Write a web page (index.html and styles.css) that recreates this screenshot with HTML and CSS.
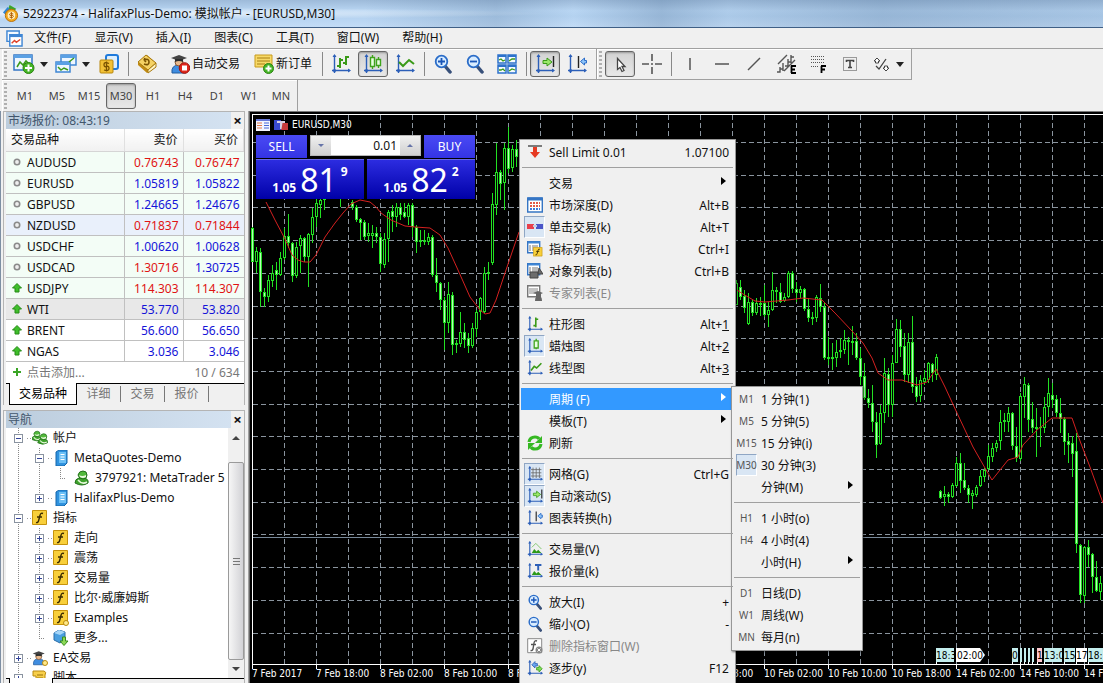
FILE: index.html
```html
<!DOCTYPE html>
<html lang="zh-CN">

<head>
    <meta charset="UTF-8">
    <meta name="viewport" content="width=device-width, initial-scale=1.0">
    <title>52922374 - HalifaxPlus-Demo: 模拟帐户 - [EURUSD,M30]</title>
    <link rel="stylesheet" href="styles.css">
</head>

<body>
    <!-- icons -->
    <svg class="sprite" aria-hidden="true">
        <symbol id="i-axes" viewBox="0 0 20 20">
            <path d="M3.5 1v18M1 16.5h18" stroke="#2c5fb8" stroke-width="1.4" fill="none" />
            <path d="M3.5 0l2 3h-4zM20 16.5l-3-2v4z" fill="#2c5fb8" />
            <circle cx="3.500" cy="16.500" r="1.600" fill="#2c5fb8" />
        </symbol>
        <symbol id="i-bars" viewBox="0 0 20 20">
            <use href="#i-axes" />
            <path d="M9 4v10M6 12h3M9 6h3M15 2v9M12 9h3M15 3h3" stroke="#3a9a18" stroke-width="2" fill="none" />
        </symbol>
        <symbol id="i-bar1" viewBox="0 0 20 20">
            <use href="#i-axes" />
            <path d="M11 2v12M8 12h3M11 4h3" stroke="#3a9a18" stroke-width="2" fill="none" />
        </symbol>
        <symbol id="i-candles" viewBox="0 0 20 20">
            <use href="#i-axes" />
            <path d="M9.500 1v2M9.500 13v2M7.500 3.500h4v9h-4zM15.500 3v2M15.500 11v3M13.500 5.500h4v6h-4z" stroke="#3fa41c" stroke-width="1.400" fill="#e8ffe0" />
        </symbol>
        <symbol id="i-candle1" viewBox="0 0 20 20">
            <use href="#i-axes" />
            <path d="M11.500 1v2M11.500 12v2M9 3.500h5v9h-5z" stroke="#3fa41c" stroke-width="1.600" fill="#e8ffe0" />
        </symbol>
        <symbol id="i-line" viewBox="0 0 20 20">
            <use href="#i-axes" />
            <path d="M4 8l4 4 6-6 5 4" stroke="#3a9a18" stroke-width="2" fill="none" />
        </symbol>
        <symbol id="i-line1" viewBox="0 0 20 20">
            <use href="#i-axes" />
            <path d="M5 13l4-5 3 2 6-6" stroke="#3a9a18" stroke-width="2" fill="none" />
        </symbol>
        <symbol id="i-scroll" viewBox="0 0 20 20">
            <use href="#i-axes" />
            <path d="M18.500 2v11" stroke="#222" stroke-width="1.400" />
            <path d="M8 6.500h4V4l5 4-5 4V9.500H8z" fill="#9be86a" stroke="#3a9a18" />
        </symbol>
        <symbol id="i-shift" viewBox="0 0 20 20">
            <use href="#i-axes" />
            <path d="M11.500 2v12" stroke="#222" stroke-width="1.400" />
            <path d="M19.500 6.500h-2V4l-4 3.500 4 3.500V9h2z" fill="#8ec4f8" stroke="#2c6cc8" />
        </symbol>
        <symbol id="i-zoomin" viewBox="0 0 20 20">
            <path d="M12 12l5 6" stroke="#38507a" stroke-width="3.500" stroke-linecap="round" />
            <circle cx="8.500" cy="7.500" r="5.800" fill="#d8ecff" stroke="#2a6cc8" stroke-width="1.800" />
            <path d="M5 7.500h7M8.500 4v7" stroke="#1a56b8" stroke-width="1.800" />
        </symbol>
        <symbol id="i-zoomout" viewBox="0 0 20 20">
            <path d="M12 12l5 6" stroke="#38507a" stroke-width="3.500" stroke-linecap="round" />
            <circle cx="8.500" cy="7.500" r="5.800" fill="#d8ecff" stroke="#2a6cc8" stroke-width="1.800" />
            <path d="M5 7.500h7" stroke="#1a56b8" stroke-width="1.800" />
        </symbol>
        <symbol id="i-caret" viewBox="0 0 8 5">
            <path d="M0 0h8L4 5z" fill="#222" />
        </symbol>
        <symbol id="i-newchart" viewBox="0 0 22 20">
            <path d="M1 1h18v15H1z" fill="#eef6ff" stroke="#3575c4" stroke-width="1.500" />
            <path d="M1 1h18v3H1z" fill="#5aa0e4" />
            <path d="M4 13l3-5 3 3 3-4 4 4" stroke="#3a9a18" stroke-width="1.500" fill="none" />
            <circle cx="15.500" cy="14" r="5.500" fill="#45b525" stroke="#2b8312" />
            <path d="M12 14h7M15.500 10.500v7" stroke="#fff" stroke-width="2" />
        </symbol>
        <symbol id="i-profiles" viewBox="0 0 22 20">
            <path d="M6 1h15v10H6z" fill="#eef6ff" stroke="#3f86d4" stroke-width="1.500" />
            <path d="M6 1h15v3H6z" fill="#5aa0e4" />
            <path d="M1 8h14v10H1z" fill="#eef6ff" stroke="#3f86d4" stroke-width="1.500" />
            <path d="M1 8h14v3H1z" fill="#5aa0e4" />
            <path d="M3 13l3 3 3-2 4 2M14 8l5-4" stroke="#3a9a18" stroke-width="1.500" fill="none" />
        </symbol>
        <symbol id="i-money" viewBox="0 0 20 20">
            <rect x="7" y="1" width="12" height="14" rx="2" fill="#dcefff" stroke="#1e7adc" stroke-width="2" />
            <rect x="1" y="6" width="13" height="13" rx="1" fill="#f2c136" stroke="#b8860b" />
            <path d="M10 9.500q-5-2-5 1t2.500 2 2.500 2-5 1.500M7.500 7.500v10" stroke="#7a5200" stroke-width="1.300" fill="none" />
        </symbol>
        <symbol id="i-book" viewBox="0 0 20 20">
            <path d="M1 9l9-8 9 8v4l-9 6-9-8z" fill="#c08a12" />
            <path d="M1 8l8-7 10 8-8 7z" fill="#f5d264" stroke="#a87a10" />
            <path d="M11 16v3l8-6V9z" fill="#fff3c4" stroke="#a87a10" />
            <path d="M7 6q5-2 5 2t-5 2M7 6l1-2M7 6l2 2" stroke="#7a5200" stroke-width="1.600" fill="none" />
        </symbol>
        <symbol id="i-expert" viewBox="0 0 20 20">
            <path d="M2 19q-1-8 7-8 8 0 7 8z" fill="#3f8de0" stroke="#235c9e" />
            <circle cx="9" cy="8" r="4" fill="#e9b98c" stroke="#8a5a34" />
            <path d="M1 4l8-3 8 3-8 3z" fill="#444" />
            <path d="M5 5v3q4-2 8 0V5z" fill="#2c2c2c" />
        </symbol>
        <symbol id="i-autotrade" viewBox="0 0 20 20">
            <use href="#i-expert" />
            <circle cx="14.500" cy="14" r="5.300" fill="#e0261a" stroke="#a0140c" />
            <rect x="12" y="11.500" width="5" height="5" fill="#fff" />
        </symbol>
        <symbol id="i-order" viewBox="0 0 20 20">
            <path d="M1 1h17v12H1z" fill="#f7d967" stroke="#c79a1c" />
            <path d="M3 4h13M3 7h13M3 10h8" stroke="#a87f14" />
            <circle cx="14.500" cy="14.500" r="5" fill="#45b525" stroke="#2b8312" />
            <path d="M11.500 14.500h6M14.500 11.500v6" stroke="#fff" stroke-width="2" />
        </symbol>
        <symbol id="i-tile" viewBox="0 0 20 20">
            <path d="M1 1h8v8H1zM11 1h8v8h-8zM1 11h8v8H1zM11 11h8v8h-8z" fill="#f4faff" stroke="#2c72cc" stroke-width="1.500" />
            <path d="M1 2h8M11 2h8M1 12h8M11 12h8" stroke="#2c72cc" stroke-width="2" />
            <path d="M2 6l2-1 2 2 2-1M12 7l3-2 3 0M2 16l2 0 2-1 2 2M12 17l3-2 3 1" stroke="#3a9a18" stroke-width="1.300" fill="none" />
        </symbol>
        <symbol id="i-cursor" viewBox="0 0 20 20">
            <path d="M7.500 4.500v11l2.500-2 2 4 2-1-2-4h3z" fill="#fff" stroke="#444" stroke-width="1.300" />
        </symbol>
        <symbol id="i-cross" viewBox="0 0 20 20">
            <path d="M10 0v7M10 13v7M0 10h7M13 10h7M9 10h2" stroke="#555" stroke-width="1.600" />
        </symbol>
        <symbol id="i-vline" viewBox="0 0 20 20">
            <path d="M10 4v12" stroke="#555" stroke-width="1.500" />
        </symbol>
        <symbol id="i-hline" viewBox="0 0 20 20">
            <path d="M3 10h14" stroke="#555" stroke-width="1.500" />
        </symbol>
        <symbol id="i-trend" viewBox="0 0 20 20">
            <path d="M4 16L16 4" stroke="#555" stroke-width="1.500" />
        </symbol>
        <symbol id="i-channel" viewBox="0 0 20 20">
            <path d="M2 10L11 1M8 17L19 6M1 18h3v-5M4 15h3M7 17V9M9 12h3V5M12 8h3M15 9V1M15 3h3" stroke="#555" stroke-width="1.400" fill="none" />
            <path d="M15 12h5M15 15.500h4M15 19h5M15.500 12v7" stroke="#000" stroke-width="1.800" />
        </symbol>
        <symbol id="i-fibo" viewBox="0 0 20 20">
            <path d="M3 2.500h14M3 5.500h14M3 8.500h14M3 12.500h8" stroke="#555" stroke-dasharray="1 1" />
            <path d="M13 12h5M13 15.500h4M13.500 12v7" stroke="#000" stroke-width="1.800" />
        </symbol>
        <symbol id="i-text" viewBox="0 0 20 20">
            <path d="M3.500 3.500h13v13h-13z" fill="none" stroke="#444" stroke-dasharray="1 1" />
            <path d="M6.500 8V6.500h7V8M10 6.500v7M8 13.500h4" stroke="#444" stroke-width="1.600" fill="none" />
        </symbol>
        <symbol id="i-arrows" viewBox="0 0 20 20">
            <path d="M6 4l3 3H7.500v2h-3V7H3zM15 17l-3-3h1.500v-2h3v2H18z" fill="#fff" stroke="#444" />
            <path d="M5 12l3 3 7-10" fill="none" stroke="#444" stroke-width="1.300" />
        </symbol>
        <symbol id="i-logo" viewBox="0 0 18 18">
            <path d="M8 0l7 4-3 4-6-2z" fill="#3ba52a" />
            <path d="M1 8l5-6 3 3-3 7z" fill="#2f86d4" />
            <circle cx="10" cy="11" r="6.500" fill="#f4a91a" stroke="#b96e08" />
            <circle cx="10" cy="11" r="4" fill="#fff0c0" />
            <path d="M12 9.500q-4-1.500-4 .3t2 1.200 2 1.300-4 .6M10 7.500v7" stroke="#b05c00" fill="none" />
        </symbol>
        <symbol id="i-window" viewBox="0 0 18 18">
            <path d="M1 1h13v11H1z" fill="#f4faff" stroke="#3f86d4" stroke-width="1.500" />
            <path d="M4 5h13v12H4z" fill="#fff" stroke="#3f86d4" stroke-width="1.500" />
            <path d="M4 6h13" stroke="#3f86d4" stroke-width="3" />
            <path d="M6 14l3-3 2 2 4-3" stroke="#e0452c" stroke-width="1.500" fill="none" />
        </symbol>
        <symbol id="i-up" viewBox="0 0 10 10">
            <path d="M5 .5L9.500 5H7v4H3V5H.5z" fill="#3fbf2b" stroke="#268a17" />
        </symbol>
        <symbol id="i-dot" viewBox="0 0 10 10">
            <circle cx="5" cy="5" r="2.700" fill="#eee" stroke="#8a8a8a" stroke-width="1.600" />
        </symbol>
        <symbol id="i-plus" viewBox="0 0 10 10">
            <path d="M5 1v8M1 5h8" stroke="#3aa525" stroke-width="2" />
        </symbol>
        <symbol id="i-user" viewBox="0 0 16 16">
            <path d="M1 13q0-4 4-5h5q5 1 4 5-6 4-13 0z" fill="#3fa32c" stroke="#22701a" />
            <path d="M4 5q1-4 5-4t4 4q0 4-4 4T4 5z" fill="#52b93b" stroke="#22701a" />
            <path d="M5 5q3 2 7 0v2q-3 2-6 0z" fill="#e8f8dc" />
            <path d="M4 10q4 5 9 2" stroke="#e8f8dc" stroke-width="1.500" fill="none" />
        </symbol>
        <symbol id="i-users" viewBox="0 0 16 16">
            <use href="#i-user" x="-1" y="0" width="11" height="12" />
            <use href="#i-user" x="5" y="2" width="12" height="14" />
        </symbol>
        <symbol id="i-server" viewBox="0 0 16 16">
            <path d="M3 2l3-2h8v13l-3 3H3z" fill="#2f92de" stroke="#1667ab" />
            <path d="M6 2h7v11H6z" fill="#6cc0f6" />
            <path d="M7.500 4.500h4M7.500 7h4M7.500 9.500h4" stroke="#fff" />
        </symbol>
        <symbol id="i-func" viewBox="0 0 16 16">
            <path d="M.5.5h14v14H.5z" fill="#f8cf3a" stroke="#c6930c" />
            <path d="M11 3.500q-2.500-1-3 2L6.500 11q-.5 2-2.500 1.500M5 7h5" stroke="#3c2c00" stroke-width="1.400" fill="none" />
        </symbol>
        <symbol id="i-funcx" viewBox="0 0 16 16">
            <use href="#i-func" />
            <circle cx="13" cy="13" r="2.500" fill="#ffe98a" stroke="#b98a10" />
        </symbol>
        <symbol id="i-more" viewBox="0 0 16 16">
            <path d="M1 3l5-3 6 2v7l-5 4-6-3z" fill="#4a9fe0" stroke="#2a6ca8" />
            <path d="M1 3l6 2 5-3-6-2z" fill="#a6d6f8" />
            <path d="M9.500 7h3v4h2.500L11 15.500 7 11h2.500z" fill="#8cd858" stroke="#3a8f1c" />
        </symbol>
        <symbol id="i-ea" viewBox="0 0 16 16">
            <use href="#i-expert" width="15" height="16" />
            <circle cx="13" cy="13" r="2.500" fill="#ffe98a" stroke="#b98a10" />
        </symbol>
        <symbol id="i-script" viewBox="0 0 16 16">
            <path d="M1 1h11q3 1 1 4v9H4V6H1z" fill="#f8cf4a" stroke="#b98a10" />
            <path d="M5 5h6M5 8h6" stroke="#9a7208" />
        </symbol>
        <symbol id="i-selllimit" viewBox="0 0 16 16">
            <path d="M1 2h14" stroke="#555" stroke-width="1.500" />
            <path d="M6 3h4v5h3l-5 6-5-6h3z" fill="#e63a22" />
        </symbol>
        <symbol id="i-depth" viewBox="0 0 16 16">
            <path d="M.7 1h14.600v14H.7z" fill="#fff" stroke="#3575c4" stroke-width="1.400" />
            <path d="M1 2h14" stroke="#3575c4" stroke-width="3" />
            <path d="M3 6h10M3 9h10" stroke="#e25a4a" stroke-width="2" stroke-dasharray="2 1" />
            <path d="M3 12h10" stroke="#3f78d8" stroke-width="2" stroke-dasharray="2 1" />
        </symbol>
        <symbol id="i-oneclick" viewBox="0 0 16 16">
            <path d="M0 5h7v5H0z" fill="#e8404c" />
            <path d="M9 5h7v5H9z" fill="#4a55c8" />
            <path d="M6 6h4v2H6z" fill="#c8cce0" />
        </symbol>
        <symbol id="i-list" viewBox="0 0 16 16">
            <path d="M.7.7h12v11H.7z" fill="#fff" stroke="#3575c4" stroke-width="1.400" />
            <path d="M1 1.500h12" stroke="#3f86d4" stroke-width="2" />
            <path d="M2 5h2M5 5h6M2 7h2M5 7h6M2 9h2M5 9h6" stroke="#777" />
        </symbol>
        <symbol id="i-indlist" viewBox="0 0 16 16">
            <use href="#i-list" />
            <use href="#i-func" x="6" y="6" width="10" height="10" />
        </symbol>
        <symbol id="i-objlist" viewBox="0 0 16 16">
            <use href="#i-list" />
            <path d="M3 9h8v6H3zM12 5l4 6h-5z" fill="#6c6c6c" stroke="#444" />
        </symbol>
        <symbol id="i-explist" viewBox="0 0 16 16">
            <path d="M.7.7h12v11H.7z" fill="#fff" stroke="#777" stroke-width="1.400" />
            <path d="M2 4h9M2 6h9M2 8h6" stroke="#888" />
            <path d="M6 8l5-2 5 2-2 1v3q1 1 1 4H8q0-3 1-4V9z" fill="#666" />
        </symbol>
        <symbol id="i-refresh" viewBox="0 0 16 16">
            <path d="M2 7q1-5 6-5 3 0 4 2" stroke="#35b822" stroke-width="3.200" fill="none" />
            <path d="M15 1v7H8z" fill="#35b822" />
            <path d="M14 9q-1 5-6 5-3 0-4-2" stroke="#35b822" stroke-width="3.200" fill="none" />
            <path d="M1 15V8h7z" fill="#35b822" />
        </symbol>
        <symbol id="i-grid" viewBox="0 0 20 20">
            <use href="#i-axes" />
            <path d="M7.500 2v13M11.500 2v13M15.500 2v13M5 4.500h13M5 8.500h13M5 12.500h13" stroke="#666" />
        </symbol>
        <symbol id="i-volume" viewBox="0 0 20 20">
            <use href="#i-axes" />
            <path d="M6 8l5-5 7 7" stroke="#6bbd55" fill="none" />
            <path d="M6 15l3-5 3 3 2-2 4 4z" fill="#2d9a18" />
        </symbol>
        <symbol id="i-tickvol" viewBox="0 0 20 20">
            <use href="#i-axes" />
            <path d="M10 2.500h8M14 2.500v7" stroke="#2c5fb8" stroke-width="2.400" />
            <path d="M6 15l3-5 3 3 2-2 4 4z" fill="#2d9a18" />
        </symbol>
        <symbol id="i-delind" viewBox="0 0 16 16">
            <path d="M.7.7h14v14H.7z" fill="#fff" stroke="#888" />
            <path d="M10 3q-2.500-1-3 2l-1 6q-.5 2-2.500 1.500M4 6.500h5" stroke="#555" stroke-width="1.400" fill="none" />
            <circle cx="12" cy="12" r="3.500" fill="#888" />
            <path d="M10.500 10.500l3 3M13.500 10.500l-3 3" stroke="#fff" />
        </symbol>
        <symbol id="i-step" viewBox="0 0 20 20">
            <use href="#i-axes" />
            <path d="M6 6l4-4v2.500h3v3h-3V10z" fill="#6aa6ee" stroke="#2c5fb8" />
            <path d="M19 11l-4-4v2.500h-3v3h3V15z" fill="#7fdc5a" stroke="#3a9a18" />
        </symbol>
    </svg>

    <header class="titlebar">
        <svg class="logo"><use href="#i-logo" /></svg>
        <h1>52922374 - HalifaxPlus-Demo: 模拟帐户 - [EURUSD,M30]</h1>
    </header>

    <nav class="menubar">
        <svg class="logo"><use href="#i-window" /></svg>
        <button>文件(F)</button>
        <button>显示(V)</button>
        <button>插入(I)</button>
        <button>图表(C)</button>
        <button>工具(T)</button>
        <button>窗口(W)</button>
        <button>帮助(H)</button>
    </nav>

    <div class="toolbars">
        <div class="toolbar">
            <span class="grip"></span>
            <button class="tool drop" aria-label="新图表"><svg class="ico wide"><use href="#i-newchart" /></svg><svg class="caret"><use href="#i-caret" /></svg></button>
            <button class="tool drop" aria-label="配置文件"><svg class="ico wide"><use href="#i-profiles" /></svg><svg class="caret"><use href="#i-caret" /></svg></button>
            <button class="tool" aria-label="市场报价"><svg class="ico"><use href="#i-money" /></svg></button>
            <i class="sep"></i>
            <button class="tool" aria-label="历史"><svg class="ico"><use href="#i-book" /></svg></button>
            <button class="tool text"><svg class="ico"><use href="#i-autotrade" /></svg>自动交易</button>
            <button class="tool text"><svg class="ico"><use href="#i-order" /></svg>新订单</button>
            <i class="sep"></i>
            <button class="tool" aria-label="柱形图"><svg class="ico"><use href="#i-bars" /></svg></button>
            <button class="tool on" aria-label="蜡烛图"><svg class="ico"><use href="#i-candles" /></svg></button>
            <button class="tool" aria-label="线型图"><svg class="ico"><use href="#i-line" /></svg></button>
            <i class="sep"></i>
            <button class="tool" aria-label="放大"><svg class="ico"><use href="#i-zoomin" /></svg></button>
            <button class="tool" aria-label="缩小"><svg class="ico"><use href="#i-zoomout" /></svg></button>
            <button class="tool" aria-label="平铺"><svg class="ico"><use href="#i-tile" /></svg></button>
            <i class="sep"></i>
            <button class="tool on" aria-label="自动滚动"><svg class="ico"><use href="#i-scroll" /></svg></button>
            <button class="tool" aria-label="图表转换"><svg class="ico"><use href="#i-shift" /></svg></button>
        </div>
        <div class="toolbar">
            <span class="grip"></span>
            <button class="tool on" aria-label="光标"><svg class="ico"><use href="#i-cursor" /></svg></button>
            <button class="tool" aria-label="十字线"><svg class="ico"><use href="#i-cross" /></svg></button>
            <i class="sep"></i>
            <button class="tool" aria-label="垂直线"><svg class="ico"><use href="#i-vline" /></svg></button>
            <button class="tool" aria-label="水平线"><svg class="ico"><use href="#i-hline" /></svg></button>
            <button class="tool" aria-label="趋势线"><svg class="ico"><use href="#i-trend" /></svg></button>
            <button class="tool" aria-label="通道"><svg class="ico"><use href="#i-channel" /></svg></button>
            <button class="tool" aria-label="斐波纳契"><svg class="ico"><use href="#i-fibo" /></svg></button>
            <button class="tool" aria-label="文本"><svg class="ico"><use href="#i-text" /></svg></button>
            <button class="tool drop" aria-label="箭头"><svg class="ico"><use href="#i-arrows" /></svg><svg class="caret"><use href="#i-caret" /></svg></button>
        </div>
    </div>
    <div class="toolbars">
        <div class="toolbar periods">
            <span class="grip"></span>
            <button class="tool">M1</button>
            <button class="tool">M5</button>
            <button class="tool">M15</button>
            <button class="tool on">M30</button>
            <button class="tool">H1</button>
            <button class="tool">H4</button>
            <button class="tool">D1</button>
            <button class="tool">W1</button>
            <button class="tool">MN</button>
        </div>
    </div>

    <main>
        <aside class="dock">
            <section class="panel">
                <header><h2>市场报价: 08:43:19</h2><button class="close" aria-label="关闭">×</button></header>
                <table class="quotes">
                    <thead>
                        <tr><th>交易品种</th><th>卖价</th><th>买价</th></tr>
                    </thead>
                    <tbody>
                        <tr class="mint"><td><svg><use href="#i-dot" /></svg>AUDUSD</td><td class="down">0.76743</td><td class="down">0.76747</td></tr>
                        <tr class="mint"><td><svg><use href="#i-dot" /></svg>EURUSD</td><td>1.05819</td><td>1.05822</td></tr>
                        <tr class="mint"><td><svg><use href="#i-dot" /></svg>GBPUSD</td><td>1.24665</td><td>1.24676</td></tr>
                        <tr class="hover"><td><svg><use href="#i-dot" /></svg>NZDUSD</td><td class="down">0.71837</td><td class="down">0.71844</td></tr>
                        <tr class="mint"><td><svg><use href="#i-dot" /></svg>USDCHF</td><td>1.00620</td><td>1.00628</td></tr>
                        <tr class="mint"><td><svg><use href="#i-dot" /></svg>USDCAD</td><td class="down">1.30716</td><td>1.30725</td></tr>
                        <tr class="mint"><td><svg><use href="#i-up" /></svg>USDJPY</td><td class="down">114.303</td><td class="down">114.307</td></tr>
                        <tr class="selected"><td><svg><use href="#i-up" /></svg>WTI</td><td>53.770</td><td>53.820</td></tr>
                        <tr><td><svg><use href="#i-up" /></svg>BRENT</td><td>56.600</td><td>56.650</td></tr>
                        <tr><td><svg><use href="#i-up" /></svg>NGAS</td><td>3.036</td><td>3.046</td></tr>
                    </tbody>
                    <tfoot>
                        <tr><td><svg><use href="#i-plus" /></svg>点击添加...</td><td colspan="2">10 / 634</td></tr>
                    </tfoot>
                </table>
                <div class="tabs">
                    <button class="active">交易品种</button>
                    <button>详细</button>
                    <button>交易</button>
                    <button>报价</button>
                </div>
            </section>

            <section class="panel navigator">
                <header><h2>导航</h2><button class="close" aria-label="关闭">×</button></header>
                <div class="treebox">
                    <ul class="tree">
                        <li><div><b class="minus"></b><svg><use href="#i-users" /></svg>帐户</div>
                            <ul>
                                <li><div><b class="minus"></b><svg><use href="#i-server" /></svg>MetaQuotes-Demo</div>
                                    <ul>
                                        <li><div><b class="leaf"></b><svg><use href="#i-user" /></svg>3797921: MetaTrader 5</div></li>
                                    </ul>
                                </li>
                                <li><div><b></b><svg><use href="#i-server" /></svg>HalifaxPlus-Demo</div></li>
                            </ul>
                        </li>
                        <li><div><b class="minus"></b><svg><use href="#i-func" /></svg>指标</div>
                            <ul>
                                <li><div><b></b><svg><use href="#i-func" /></svg>走向</div></li>
                                <li><div><b></b><svg><use href="#i-func" /></svg>震荡</div></li>
                                <li><div><b></b><svg><use href="#i-func" /></svg>交易量</div></li>
                                <li><div><b></b><svg><use href="#i-func" /></svg>比尔·威廉姆斯</div></li>
                                <li><div><b></b><svg><use href="#i-funcx" /></svg>Examples</div></li>
                                <li><div><b class="leaf"></b><svg><use href="#i-more" /></svg>更多...</div></li>
                            </ul>
                        </li>
                        <li><div><b></b><svg><use href="#i-ea" /></svg>EA交易</div></li>
                        <li><div><b></b><svg><use href="#i-script" /></svg>脚本</div></li>
                    </ul>
                    <div class="scrollbar">
                        <span class="arrow up"></span>
                        <span class="thumb"></span>
                        <span class="arrow"></span>
                    </div>
                </div>
                <div class="navtabs"><span></span></div>
            </section>
        </aside>

        <section class="chart">
            <svg id="plot" class="plot" role="img" aria-label="EURUSD,M30"></svg>
            <div class="overlay">
                <div class="caption">
                    <svg viewBox="0 0 14 12">
                        <path d="M0 0h14v12H0z" fill="#f4f6ff" />
                        <path d="M0 1h14" stroke="#6a7ad8" stroke-width="2" />
                        <path d="M1 4h5M1 6.500h5M1 9h5" stroke="#e07a4a" />
                        <path d="M8 4h5M8 6.500h5M8 9h5" stroke="#4a6ad8" />
                    </svg>
                    <svg viewBox="0 0 14 12">
                        <path d="M0 1h7v10H0z" fill="#3a4ad0" />
                        <path d="M7 4h7v7H7z" fill="#c83a3a" />
                        <path d="M3 2h8v2H8.500l-1 6H6V4H3z" fill="#d8d0e0" />
                    </svg>
                    EURUSD,M30
                </div>
                <div class="trade">
                    <div class="row">
                        <button class="side">SELL</button>
                        <div class="volume">
                            <button aria-label="减少"><i></i></button>
                            <input type="text" value="0.01" aria-label="交易量">
                            <button aria-label="增加"><i class="up"></i></button>
                        </div>
                        <button class="side">BUY</button>
                    </div>
                    <div class="row">
                        <button class="price"><small>1.05</small><strong>81</strong><sup>9</sup></button>
                        <button class="price"><small>1.05</small><strong>82</strong><sup>2</sup></button>
                    </div>
                </div>
            </div>
        </section>
    </main>

    <ul class="menu context">
        <li><button><span class="mi"><svg><use href="#i-selllimit" /></svg></span>Sell Limit 0.01<kbd>1.07100</kbd></button></li>
        <li class="line"></li>
        <li><button class="more"><span class="mi"></span>交易</button></li>
        <li><button><span class="mi"><svg><use href="#i-depth" /></svg></span>市场深度(D)<kbd>Alt+B</kbd></button></li>
        <li><button><span class="mi on"><svg><use href="#i-oneclick" /></svg></span>单击交易(k)<kbd>Alt+T</kbd></button></li>
        <li><button><span class="mi"><svg><use href="#i-indlist" /></svg></span>指标列表(L)<kbd>Ctrl+I</kbd></button></li>
        <li><button><span class="mi"><svg><use href="#i-objlist" /></svg></span>对象列表(b)<kbd>Ctrl+B</kbd></button></li>
        <li><button disabled><span class="mi"><svg><use href="#i-explist" /></svg></span>专家列表(E)</button></li>
        <li class="line"></li>
        <li><button><span class="mi"><svg><use href="#i-bar1" /></svg></span>柱形图<kbd>Alt+<u>1</u></kbd></button></li>
        <li><button><span class="mi on"><svg><use href="#i-candle1" /></svg></span>蜡烛图<kbd>Alt+<u>2</u></kbd></button></li>
        <li><button><span class="mi"><svg><use href="#i-line1" /></svg></span>线型图<kbd>Alt+<u>3</u></kbd></button></li>
        <li class="line"></li>
        <li class="open"><button class="more"><span class="mi"></span>周期 (F)</button>
            <ul class="menu submenu">
                <li><button><span class="mi">M1</span>1 分钟(1)</button></li>
                <li><button><span class="mi">M5</span>5 分钟(5)</button></li>
                <li><button><span class="mi">M15</span>15 分钟(i)</button></li>
                <li><button><span class="mi on">M30</span>30 分钟(3)</button></li>
                <li><button class="more"><span class="mi"></span>分钟(M)</button></li>
                <li class="line"></li>
                <li><button><span class="mi">H1</span>1 小时(o)</button></li>
                <li><button><span class="mi">H4</span>4 小时(4)</button></li>
                <li><button class="more"><span class="mi"></span>小时(H)</button></li>
                <li class="line"></li>
                <li><button><span class="mi">D1</span>日线(D)</button></li>
                <li><button><span class="mi">W1</span>周线(W)</button></li>
                <li><button><span class="mi">MN</span>每月(n)</button></li>
            </ul>
        </li>
        <li><button class="more"><span class="mi"></span>模板(T)</button></li>
        <li><button><span class="mi"><svg><use href="#i-refresh" /></svg></span>刷新</button></li>
        <li class="line"></li>
        <li><button><span class="mi on"><svg><use href="#i-grid" /></svg></span>网格(G)<kbd>Ctrl+G</kbd></button></li>
        <li><button><span class="mi on"><svg><use href="#i-scroll" /></svg></span>自动滚动(S)</button></li>
        <li><button><span class="mi"><svg><use href="#i-shift" /></svg></span>图表转换(h)</button></li>
        <li class="line"></li>
        <li><button><span class="mi"><svg><use href="#i-volume" /></svg></span>交易量(V)</button></li>
        <li><button><span class="mi"><svg><use href="#i-tickvol" /></svg></span>报价量(k)</button></li>
        <li class="line"></li>
        <li><button><span class="mi"><svg><use href="#i-zoomin" /></svg></span>放大(I)<kbd>+</kbd></button></li>
        <li><button><span class="mi"><svg><use href="#i-zoomout" /></svg></span>缩小(O)<kbd>-</kbd></button></li>
        <li><button disabled><span class="mi"><svg><use href="#i-delind" /></svg></span>删除指标窗口(W)</button></li>
        <li><button><span class="mi"><svg><use href="#i-step" /></svg></span>逐步(y)<kbd>F12</kbd></button></li>
    </ul>

    <script src="chart.js"></script>
</body>

</html>
```
FILE: styles.css
```css
* {
    box-sizing: border-box;
    margin: 0;
    padding: 0;
}

body {
    height: 100vh;
    display: flex;
    flex-direction: column;
    position: relative;
    overflow: hidden;
    background: #f0f0f0;
    color: #111;
    font: 12px/20px "Noto Sans", "Noto Sans CJK SC", sans-serif;
}

button,
input {
    font: inherit;
    color: inherit;
    border: none;
    background: none;
}

ul {
    list-style: none;
}

svg {
    display: block;
    flex: none;
}

.sprite {
    position: absolute;
    width: 0;
    height: 0;
}

.titlebar {
    height: 28px;
    flex: none;
    display: flex;
    align-items: center;
    gap: 4px;
    padding-left: 2px;
    border-bottom: 1px solid #3f5f85;
    background:
        radial-gradient(ellipse at 8% 50%, rgba(255, 255, 255, 0.75), rgba(255, 255, 255, 0) 32%),
        linear-gradient(90deg, rgba(0, 40, 90, 0) 33%, rgba(60, 95, 135, 0.2) 45%, rgba(0, 40, 90, 0) 52%, rgba(60, 95, 135, 0.25) 60%, rgba(60, 95, 135, 0.08) 66%, rgba(60, 95, 135, 0.25) 80%, rgba(60, 95, 135, 0.12) 100%),
        linear-gradient(#9dbad9, #b9d6f3 40%, #b4d2f0 60%, #c3dcf6);
}

.titlebar h1 {
    font-size: 12px;
    font-weight: normal;
}

.logo {
    width: 17px;
    height: 17px;
}

.menubar {
    height: 21px;
    flex: none;
    display: flex;
    align-items: center;
    gap: 23px;
    padding-left: 6px;
    border-bottom: 1px solid #a0a0a0;
}

.menubar .logo {
    margin-right: -12px;
}

/* toolbars */
.toolbars {
    display: flex;
    height: 31px;
    flex: none;
    padding-left: 2px;
}

.toolbar {
    display: flex;
    align-items: center;
    gap: 2px;
    padding: 0 4px 0 2px;
    border-right: 1px solid #a0a0a0;
    border-bottom: 1px solid #a0a0a0;
    box-shadow: inset 1px 1px #fff;
}

.periods {
    padding-right: 1px;
    border-bottom: none;
    color: #444;
    font-size: 11px;
}

.grip {
    width: 3px;
    height: 26px;
    margin-right: 1px;
    background: repeating-linear-gradient(#b0b0b0 0 2px, #f0f0f0 2px 4px);
}

.tool {
    width: 30px;
    height: 26px;
    display: flex;
    align-items: center;
    justify-content: center;
    border-radius: 3px;
}

.tool.drop {
    width: 40px;
    gap: 5px;
}

.tool.text {
    width: auto;
    gap: 2px;
    padding: 0 6px;
}

.tool.on {
    border: 1px solid #666;
    background: linear-gradient(#d2d2d2, #e8e8e8);
    box-shadow: inset 0 1px 2px #999;
}

.ico {
    width: 20px;
    height: 20px;
}

.ico.wide {
    width: 22px;
}

.caret {
    width: 8px;
    height: 5px;
}

.sep {
    width: 1px;
    height: 24px;
    margin: 0 1px 0 2px;
    background: #888;
}

main {
    flex: 1;
    min-height: 0;
    display: flex;
    background: #d8d8d8;
}

/* left dock */
.dock {
    width: 249px;
    flex: none;
    display: flex;
    flex-direction: column;
    gap: 5px;
    padding: 0 3px 0 2px;
    background: #f0f0f0;
    border-left: 1px solid #7e8fa3;
    border-right: 1px solid #a0a0a0;
}

.panel {
    padding-left: 2px;
    border: 1px solid #b4b4b4;
    border-bottom: none;
}

.panel header {
    display: flex;
    height: 17px;
    align-items: center;
    justify-content: space-between;
    background: linear-gradient(90deg, #bccddd, #d5e3f2);
}

.panel h2 {
    font-size: 12px;
    font-weight: normal;
    color: #42566c;
    padding-left: 2px;
}

.close {
    width: 13px;
    height: 17px;
    line-height: 15px;
    font-size: 15px;
    font-weight: bold;
    background: #f0f0f0;
}

.quotes {
    width: 100%;
    border-collapse: collapse;
    table-layout: fixed;
    background: #fff;
}

.quotes th {
    height: 22px;
    font-weight: normal;
    text-align: right;
    padding: 0 5px;
    background: linear-gradient(#fff, #f1f1f1);
    border-right: 1px solid #e0e0e0;
    border-bottom: 1px solid #d5d5d5;
}

.quotes th:first-child {
    width: 118px;
    text-align: left;
}

.quotes th:nth-child(2) {
    width: 59px;
}

.quotes td {
    height: 21px;
    line-height: 18px;
    text-align: right;
    padding: 2px 4px 0 3px;
    color: #1414d8;
    border-bottom: 1px solid #c0c0c0;
    border-right: 1px solid #c0c0c0;
}

.quotes td:last-child {
    border-right: none;
}

.quotes td:first-child {
    text-align: left;
    color: #111;
}

.quotes td svg {
    display: inline-block;
    width: 10px;
    height: 10px;
    margin: 0 5px 0 3px;
}

.quotes td.down {
    color: #e01414;
}

.mint {
    background: #f3fdf6;
}

.hover {
    background: #e9f0fb;
}

.selected {
    background: #e8e8e8;
}

.quotes tfoot td,
.quotes tfoot td:first-child {
    height: 22px;
    color: #777;
    border: none;
}

.tabs {
    display: flex;
    height: 22px;
    padding-left: 3px;
    border-top: 1px solid #000;
    color: #777;
}

.tabs button {
    width: 44px;
    height: 16px;
    line-height: 16px;
    margin-top: 2px;
    border-right: 1px solid #777;
}

.tabs .active {
    width: 68px;
    height: 22px;
    margin-top: -1px;
    border: 1px solid #000;
    border-top: none;
    background: #fff;
    color: #000;
}

.navigator {
    flex: 1;
    min-height: 0;
    display: flex;
    flex-direction: column;
}

.navigator header {
    flex: none;
}

.treebox {
    flex: 1;
    min-height: 0;
    display: flex;
    background: #fff;
}

.tree {
    flex: 1;
    overflow: hidden;
    white-space: nowrap;
}

.tree ul {
    padding-left: 21px;
}

.tree li {
    background: repeating-linear-gradient(#888 0 1px, transparent 1px 2px) 12px 0 / 1px 100% no-repeat;
}

.tree ul>li:last-child {
    background-size: 1px 10px;
}

.tree div {
    display: flex;
    align-items: center;
    height: 20px;
    padding-left: 8px;
}

.tree svg {
    width: 16px;
    height: 16px;
    margin: 0 5px 0 9px;
    overflow: visible;
}

.tree b {
    width: 9px;
    height: 9px;
    flex: none;
    border: 1px solid #8a93a0;
    background:
        linear-gradient(#33449a, #33449a) center / 5px 1px no-repeat,
        linear-gradient(#33449a, #33449a) center / 1px 5px no-repeat,
        #fff;
    box-shadow: 9px 0 0 -4px #999, 12px 0 0 -4px #999;
}

.tree .minus {
    background: linear-gradient(#33449a, #33449a) center / 5px 1px no-repeat, #fff;
}

.tree .leaf {
    border: none;
    box-shadow: none;
    background: repeating-linear-gradient(90deg, #888 0 1px, transparent 1px 2px) 4px 4px / 9px 1px no-repeat;
}

.scrollbar {
    width: 16px;
    display: flex;
    flex-direction: column;
    background: #f0f0f0;
}

.arrow {
    width: 8px;
    height: 8px;
    margin: 7px 0 3px;
    align-self: center;
    border: 4px solid transparent;
    border-top-color: #444;
}

.arrow.up {
    margin: 4px 0 22px;
    border-color: transparent transparent #444;
}

.thumb {
    flex: 1;
    border: 1px solid #9a9a9a;
    border-radius: 2px;
    background:
        repeating-linear-gradient(#777 0 1px, transparent 1px 3px) center / 7px 7px no-repeat,
        linear-gradient(90deg, #f6f6f6, #d2d2d6);
}

.navtabs {
    height: 5px;
    flex: none;
    padding-left: 3px;
    border-top: 1px solid #000;
}

.navtabs span {
    display: block;
    width: 44px;
    height: 5px;
    margin-top: -1px;
    background: #fff;
    border: solid #000;
    border-width: 0 1px;
}

/* chart */
.chart {
    flex: 1;
    min-width: 0;
    position: relative;
    background: #000;
    border-left: 1px solid #666;
    border-top: 1px solid #777;
}

.plot {
    width: 100%;
    height: 100%;
}

.plot text {
    font: 10px "DejaVu Sans Condensed", "Noto Sans", sans-serif;
    fill: #fff;
}

.plot .tag {
    fill: #000;
}

.overlay {
    position: absolute;
    top: 6px;
    left: 6px;
    width: 219px;
    color: #fff;
}

.caption {
    display: flex;
    align-items: center;
    gap: 4px;
    height: 13px;
    font: 10px "DejaVu Sans Condensed", "Noto Sans", sans-serif;
}

.caption svg {
    width: 14px;
    height: 12px;
}

.trade {
    display: flex;
    flex-direction: column;
    gap: 1px;
    margin-top: 4px;
    background: #000;
}

.row {
    display: flex;
    justify-content: space-between;
    gap: 3px;
}

.side {
    width: 51px;
    height: 23px;
    flex: none;
    background: linear-gradient(#4a4af4, #3434e4);
}

.volume {
    flex: 1;
    min-width: 0;
    display: flex;
    height: 21px;
    border: 1px solid #b8b8b8;
    background: #fff;
    color: #111;
}

.volume input {
    flex: 1;
    min-width: 0;
    width: 0;
    padding-right: 3px;
    text-align: right;
    outline: none;
}

.volume button {
    width: 20px;
    flex: none;
    background: linear-gradient(#f0f0f0, #cfcfcf);
    display: flex;
    align-items: center;
    justify-content: center;
}

.volume i {
    border: 3px solid transparent;
    border-top-color: #6674a8;
    border-bottom: none;
}

.volume i.up {
    border: 3px solid transparent;
    border-bottom-color: #6674a8;
    border-top: none;
}

.price {
    flex: 1;
    height: 40px;
    display: flex;
    justify-content: center;
    align-items: baseline;
    gap: 4px;
    line-height: 40px;
    border-top: 1px solid #6868e8;
    background: linear-gradient(#2c2ce0, #0000a8);
}

.price small {
    font-size: 12px;
    font-weight: bold;
}

.price strong {
    font-size: 32px;
    font-weight: normal;
}

.price sup {
    font-size: 12px;
    font-weight: bold;
    line-height: 24px;
    align-self: flex-start;
}

/* popup menus */
.menu {
    position: absolute;
    background: #f0f0f0;
    border: 1px solid #979797;
    padding: 1px;
    box-shadow: 1px 1px 2px rgba(0, 0, 0, 0.5);
}

.context {
    top: 139px;
    left: 519px;
    bottom: -20px;
    width: 217px;
}

.submenu {
    top: -2px;
    left: calc(100% - 3px);
    width: 132px;
    padding-bottom: 2px;
}

.menu li {
    position: relative;
}

.menu button {
    display: flex;
    align-items: center;
    width: 100%;
    height: 22px;
    padding: 2px 5px 0 3px;
    white-space: nowrap;
}

.menu button:disabled {
    color: #888;
}

.menu .line {
    height: 9px;
    padding: 4px 1px;
}

.menu .line::before {
    content: "";
    display: block;
    height: 1px;
    background: #a0a0a0;
}

.mi {
    width: 21px;
    height: 22px;
    margin: -2px 4px 0 0;
    display: flex;
    align-items: center;
    justify-content: center;
    font-size: 10px;
    color: #555;
}

.mi svg {
    width: 16px;
    height: 16px;
}

.mi.on {
    border: 1px solid #8fa6c4;
    border-right-color: #fff;
    border-bottom-color: #fff;
    background: #d9e6f4;
}

.menu kbd {
    margin-left: auto;
    font: inherit;
}

.menu .more::after {
    content: "";
    margin: -6px 3px 0 auto;
    border: 4px solid transparent;
    border-left: 5px solid #000;
    border-right: none;
}

.open>button {
    background: #3399ff;
    color: #fff;
}

.menu .open>button::after {
    border-left-color: #fff;
}
```
FILE: chart.js
```js
const plot = document.getElementById("plot");
const NS = "http://www.w3.org/2000/svg";

// x of the first bar, then [high, top, bottom, low, filled] for every bar
const series = [
    [252, [
        [227, 228, 262, 262, 1], [247, 251, 262, 273, 0], [248, 252, 292, 307, 1], [288, 292, 297, 307, 1],
        [275, 280, 297, 302, 0], [265, 273, 281, 287, 0], [262, 270, 275, 290, 1], [252, 258, 275, 276, 0],
        [228, 236, 258, 260, 0], [214, 236, 243, 248, 1], [242, 243, 276, 282, 1], [242, 247, 276, 278, 0],
        [235, 238, 246, 273, 0], [237, 238, 257, 262, 1], [233, 234, 257, 287, 0], [208, 217, 235, 243, 0],
        [197, 203, 217, 227, 0], [195, 200, 205, 218, 0], [195, 196, 200, 210, 1], [180, 185, 196, 198, 0],
        [178, 182, 190, 196, 0], [176, 180, 192, 197, 1], [178, 184, 196, 207, 1], [176, 180, 196, 198, 0],
        [178, 182, 190, 196, 1], [200, 202, 207, 210, 1], [205, 207, 220, 222, 1], [218, 219, 223, 240, 1],
        [220, 222, 237, 240, 1], [223, 233, 236, 242, 0], [225, 233, 236, 248, 0], [227, 233, 237, 243, 1],
        [233, 237, 264, 272, 1], [233, 239, 265, 268, 0], [210, 212, 239, 262, 0], [205, 211, 217, 232, 1],
        [203, 207, 217, 227, 0], [203, 207, 215, 220, 1], [203, 212, 217, 218, 1], [203, 205, 217, 225, 0],
        [203, 205, 227, 237, 1], [225, 227, 242, 253, 1], [230, 240, 242, 247, 0], [230, 240, 242, 245, 1],
        [233, 237, 242, 245, 0], [235, 237, 275, 277, 1], [258, 275, 283, 292, 1], [282, 283, 300, 310, 1],
        [297, 300, 323, 350, 1], [282, 294, 323, 333, 0], [292, 295, 345, 355, 1], [340, 343, 345, 353, 0],
        [312, 332, 344, 347, 0], [323, 332, 340, 348, 1], [333, 338, 346, 353, 1], [323, 328, 346, 348, 0],
        [310, 312, 329, 337, 0], [297, 298, 312, 320, 0], [267, 273, 312, 313, 0], [262, 272, 274, 280, 1],
        [193, 204, 263, 265, 0], [143, 172, 205, 215, 0], [170, 172, 184, 200, 1], [143, 148, 183, 210, 0],
        [127, 148, 169, 173, 1], [145, 149, 168, 172, 0], [140, 149, 157, 167, 1]
    ]],
    [736, [
        [280, 283, 305, 305, 0], [280, 287, 297, 300, 1], [290, 296, 308, 313, 1], [293, 302, 324, 325, 0],
        [300, 302, 313, 316, 1], [298, 303, 313, 315, 0], [297, 303, 305, 316, 0], [285, 303, 315, 317, 1],
        [302, 310, 315, 327, 0], [272, 290, 310, 311, 0], [287, 290, 292, 303, 0], [283, 292, 302, 303, 1],
        [293, 297, 301, 302, 0], [271, 273, 297, 298, 0], [271, 273, 289, 293, 1], [282, 289, 293, 302, 1],
        [286, 289, 293, 298, 0], [288, 289, 309, 311, 1], [298, 309, 318, 322, 1], [312, 317, 319, 325, 1],
        [295, 297, 318, 322, 0], [284, 298, 307, 312, 1], [303, 307, 358, 360, 1], [337, 357, 359, 365, 1],
        [343, 357, 359, 370, 0], [340, 352, 358, 367, 0], [338, 350, 352, 358, 0], [330, 340, 350, 354, 0],
        [337, 340, 342, 365, 1], [326, 341, 343, 355, 0], [333, 341, 358, 360, 1], [348, 358, 377, 385, 1],
        [363, 376, 398, 400, 1], [389, 398, 403, 408, 1], [385, 403, 422, 432, 1], [412, 422, 445, 458, 1],
        [405, 413, 444, 445, 0], [358, 373, 413, 423, 0], [368, 374, 405, 417, 1], [355, 363, 405, 417, 0],
        [319, 329, 363, 363, 0], [320, 329, 347, 357, 1], [333, 346, 375, 382, 1], [333, 342, 375, 383, 0],
        [316, 342, 387, 393, 1], [377, 386, 397, 402, 1], [375, 380, 396, 402, 0], [370, 378, 382, 385, 0],
        [362, 363, 380, 383, 0], [363, 364, 373, 382, 1], [354, 357, 375, 380, 0], [490, 491, 498, 499, 1],
        [486, 494, 497, 506, 0], [492, 494, 497, 503, 1], [483, 485, 497, 498, 0], [457, 463, 486, 487, 0],
        [453, 463, 481, 493, 1], [463, 480, 488, 490, 1], [485, 488, 495, 503, 1], [490, 493, 496, 509, 0],
        [485, 487, 495, 497, 0], [470, 476, 486, 487, 0], [468, 470, 477, 482, 0], [445, 456, 469, 470, 0],
        [443, 448, 457, 462, 0], [440, 443, 448, 452, 0], [410, 422, 441, 450, 0], [413, 420, 422, 432, 0],
        [407, 413, 422, 432, 0], [412, 413, 446, 450, 1], [427, 446, 458, 462, 1], [393, 396, 459, 461, 0],
        [377, 384, 397, 418, 0], [383, 385, 420, 432, 1], [402, 419, 428, 433, 1], [408, 427, 429, 457, 0],
        [417, 427, 428, 447, 0], [397, 407, 428, 433, 0], [378, 393, 407, 417, 0], [383, 395, 400, 408, 1],
        [395, 399, 413, 417, 1], [398, 413, 419, 433, 1], [417, 419, 442, 455, 1], [433, 441, 445, 463, 1],
        [436, 443, 454, 477, 1], [433, 451, 544, 553, 1], [544, 545, 595, 603, 1], [546, 547, 596, 603, 0],
        [540, 547, 555, 567, 1], [553, 554, 577, 593, 1], [561, 577, 591, 592, 1], [576, 583, 592, 600, 0]
    ]]
];

const average = [
    "266,202 275,220 285,239 292,255 298,260 304,262 310,262 316,255 325,237 335,223 343,213 351,204 360,200 370,202 376,207 381,213 391,220 405,226 415,227 430,228 440,235 448,248 458,270 470,297 480,310 485,314 490,313 496,300 506,270 519,232",
    "737,290 743,294 755,301 765,302 788,300 803,298 822,300 835,313 852,331 863,343 872,358 878,373 888,380 902,380 917,385 927,382 936,369 945,387 957,413 973,447 985,468 992,480 1008,460 1018,457 1023,445 1037,430 1052,418 1072,418 1080,441 1090,467 1103,503"
];

const labels = ["7 Feb 2017", "7 Feb 18:00", "8 Feb 02:00", "8 Feb 10:00", "8 Feb 18:00", "9 Feb 02:00", "9 Feb 10:00",
    "9 Feb 18:00", "10 Feb 02:00", "10 Feb 10:00", "10 Feb 18:00", "14 Feb 02:00", "14 Feb 10:00", "14 Feb 18:00"];

// news tags on the time axis: x, width, colour, text
const tags = [
    [936, 19, "#c4eeee", "18:3"], [1012, 7, "#c4eeee", "0"], [1020, 3, "#c4eeee", ""], [1024, 3, "#c4eeee", ""],
    [1028, 3, "#c4eeee", ""], [1032, 3, "#c4eeee", ""], [1037, 6, "#ffc8d0", "1"], [1044, 19, "#c4eeee", "13:0"],
    [1064, 12, "#c4eeee", "15"], [1076, 12, "#ffffff", "17"], [1088, 20, "#c4eeee", "18:"]
];

function add(parent, name, attrs, text) {
    const el = document.createElementNS(NS, name);
    for (const key in attrs) {
        el.setAttribute(key, attrs[key]);
    }
    if (text) {
        el.textContent = text;
    }
    parent.appendChild(el);
    return el;
}

function line(parent, x1, y1, x2, y2, stroke, dash) {
    add(parent, "line", { x1: x1, y1: y1, x2: x2, y2: y2, stroke: stroke, "stroke-dasharray": dash || "none" });
}

function drawChart() {
    const root = add(plot, "g", { transform: "translate(-250 -112)" });
    const right = 250 + plot.clientWidth;
    const axis = 664;

    const grid = add(root, "g", { "shape-rendering": "crispEdges" });
    for (let x = 284.5; x < right; x += 32) {
        line(grid, x, 115, x, axis, "#8a949e", "5 3");
    }
    for (let i = 0; i < 16; i++) {
        const y = Math.round(142 + i * 32.7) + 0.5;
        line(grid, 253, y, right, y, "#8a949e", "5 3");
    }
    line(grid, 253, 537.5, right, 537.5, "#778899");
    line(grid, 252.5, 114, 252.5, axis, "#fff");
    line(grid, 252, 114.5, right, 114.5, "#fff");
    line(grid, 252, axis + 0.5, right, axis + 0.5, "#fff");

    const bars = add(root, "g", { "shape-rendering": "crispEdges" });
    series.forEach(([start, data]) => {
        data.forEach(([high, top, bottom, low, filled], i) => {
            const x = start + i * 4;
            const height = Math.max(bottom - top, 1);
            add(bars, "rect", { x: x, y: high, width: 1, height: low - high, fill: "#22e022" });
            add(bars, "rect", { x: x - 1, y: top, width: 3, height: height, fill: "#22e022" });
            if (height > 2) {
                add(bars, "rect", { x: x, y: top + 1, width: 1, height: height - 2, fill: filled ? "#b8ffb8" : "#000" });
            }
        });
    });

    average.forEach(points => add(root, "polyline", { points: points, fill: "none", stroke: "#d42020" }));

    labels.forEach((label, i) => {
        const x = 252 + i * 64;
        line(root, x + 0.5, axis, x + 0.5, axis + 5, "#fff");
        add(root, "text", { x: x, y: 677 }, label);
    });

    tags.forEach(([x, width, fill, label]) => {
        line(root, x + 0.5, 648, x + 0.5, axis, "#fff");
        const box = add(root, "svg", { x: x, y: 648, width: width, height: 14 });
        add(box, "rect", { width: width - 1, height: 14, fill: fill });
        if (label) {
            add(box, "text", { x: 0, y: 11, class: "tag" }, label);
        }
    });
    add(root, "path", { d: "M956 648h24l5 7-5 7h-24z", fill: "#fff" });
    add(root, "text", { x: 957, y: 659, class: "tag" }, "02:00");
}

drawChart();
```
